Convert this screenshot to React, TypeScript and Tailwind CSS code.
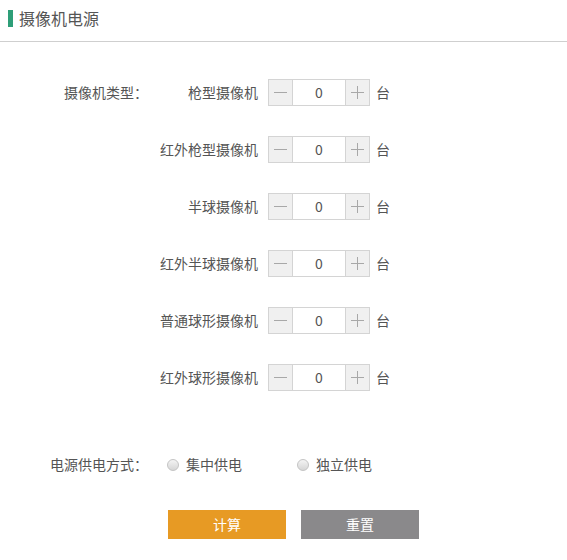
import React from "react";

const rows = [
  "枪型摄像机",
  "红外枪型摄像机",
  "半球摄像机",
  "红外半球摄像机",
  "普通球形摄像机",
  "红外球形摄像机",
];

function Stepper() {
  return (
    <div className="flex h-[27px] w-[102px] border border-[#d4d4d4] bg-white">
      <div className="flex w-[24px] items-center justify-center bg-[#f0f0f0] border-r border-[#d4d4d4]">
        <svg width="13" height="13" viewBox="0 0 13 13">
          <line x1="0" y1="6.5" x2="13" y2="6.5" stroke="#a8a8a8" strokeWidth="1" />
        </svg>
      </div>
      <div className="flex flex-1 items-center justify-center text-[14px] text-[#555]">0</div>
      <div className="flex w-[24px] items-center justify-center bg-[#f0f0f0] border-l border-[#d4d4d4]">
        <svg width="13" height="13" viewBox="0 0 13 13">
          <line x1="0" y1="6.5" x2="13" y2="6.5" stroke="#a8a8a8" strokeWidth="1" />
          <line x1="6.5" y1="0" x2="6.5" y2="13" stroke="#a8a8a8" strokeWidth="1" />
        </svg>
      </div>
    </div>
  );
}

function Radio({ label }: { label: string }) {
  return (
    <div className="flex items-center">
      <span className="h-[12px] w-[12px] rounded-full border border-[#c4c4c4] bg-gradient-to-b from-[#f4f4f4] to-[#d6d6d6]" />
      <span className="ml-[7px] text-[14px] text-[#555]">{label}</span>
    </div>
  );
}

export default function App() {
  return (
    <div
      className="w-[567px] h-[560px] bg-white"
      style={{ fontFamily: '"Noto Sans CJK SC", "Noto Sans", sans-serif' }}
    >
      <div className="flex h-[42px] items-start border-b border-[#cfcfcf] pt-[10px] pl-[8px]">
        <span className="h-[17px] w-[5px] bg-[#2e9e78]" />
        <span className="ml-[6px] text-[16px] leading-[17px] text-[#555]">摄像机电源</span>
      </div>

      <div className="flex flex-col gap-[30px] pt-[37px]">
        {rows.map((r, i) => (
          <div key={r} className="flex h-[27px] items-center">
            <div className="w-[148px] text-right text-[14px] text-[#555]">
              {i === 0 ? "摄像机类型：" : ""}
            </div>
            <div className="w-[110px] text-right text-[14px] text-[#555]">{r}</div>
            <div className="ml-[10px]">
              <Stepper />
            </div>
            <div className="ml-[6px] text-[14px] text-[#555]">台</div>
          </div>
        ))}
      </div>

      <div className="mt-[60px] flex h-[27px] items-center">
        <div className="w-[148px] text-right text-[14px] text-[#555]">电源供电方式：</div>
        <div className="ml-[19px] w-[130px]">
          <Radio label="集中供电" />
        </div>
        <Radio label="独立供电" />
      </div>

      <div className="mt-[32px] flex gap-[15px] pl-[168px]">
        <button className="h-[29px] w-[118px] bg-[#e79a24] text-[14px] text-white">计算</button>
        <button className="h-[29px] w-[118px] bg-[#8a898b] text-[14px] text-white">重置</button>
      </div>
    </div>
  );
}
